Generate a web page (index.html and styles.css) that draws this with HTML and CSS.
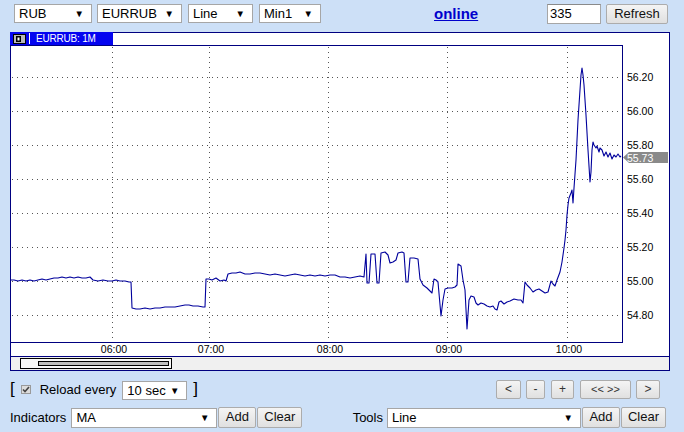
FILE: index.html
```html
<!DOCTYPE html>
<html>
<head>
<meta charset="utf-8">
<link rel="stylesheet" href="styles.css">
</head>
<body>
<div class="topbar">
  <div class="sel w-rub">RUB<span class="arr">▼</span></div>
  <div class="sel w-pair">EURRUB<span class="arr">▼</span></div>
  <div class="sel w-line">Line<span class="arr">▼</span></div>
  <div class="sel w-min">Min1<span class="arr">▼</span></div>
  <a class="online" href="#">online</a>
  <div class="inp">335</div>
  <div class="btn refresh">Refresh</div>
</div>

<div class="chart">
  <div class="titlebar">
    <div class="tab">
      <svg class="tabicon" width="13" height="10" viewBox="0 0 13 10">
        <rect x="0.5" y="0.5" width="12" height="9" fill="#b8b8b8" stroke="#000"/>
        <rect x="3" y="2" width="5" height="6" fill="#000"/>
        <rect x="4.5" y="3.5" width="2" height="3" fill="#fff"/>
      </svg>
      <span class="sep"></span>
      <span class="tabtext">EURRUB: 1M</span>
    </div>
  </div>
  <svg class="plot" width="658" height="311" viewBox="11 45 658 311">
    <g stroke="#555" stroke-width="1" stroke-dasharray="1 4" fill="none">
      <line x1="12" y1="77.5" x2="622" y2="77.5"/>
      <line x1="12" y1="111.5" x2="622" y2="111.5"/>
      <line x1="12" y1="145.5" x2="622" y2="145.5"/>
      <line x1="12" y1="179.5" x2="622" y2="179.5"/>
      <line x1="12" y1="213.5" x2="622" y2="213.5"/>
      <line x1="12" y1="247.5" x2="622" y2="247.5"/>
      <line x1="12" y1="281.5" x2="622" y2="281.5"/>
      <line x1="12" y1="315.5" x2="622" y2="315.5"/>
      <line x1="112.5" y1="47" x2="112.5" y2="342"/>
      <line x1="209.5" y1="47" x2="209.5" y2="342"/>
      <line x1="328.5" y1="47" x2="328.5" y2="342"/>
      <line x1="447.5" y1="47" x2="447.5" y2="342"/>
      <line x1="567.5" y1="47" x2="567.5" y2="342"/>
    </g>
    <g stroke="#000080" stroke-width="1" fill="none">
      <line x1="11" y1="45.5" x2="623" y2="45.5"/>
      <line x1="622.5" y1="45" x2="622.5" y2="343"/>
      <line x1="11" y1="342.5" x2="623" y2="342.5"/>
    </g>
    <polyline fill="none" stroke="#00009c" stroke-width="1.1" stroke-linejoin="round" points="11,280 14,280 18,281 22,280 26,281 30,280 34,281 38,280 42,279 46,280 50,279 54,278 58,278 62,277 66,278 70,277 74,278 78,277 82,278 86,278 90,277 93,280 98,281 103,280 108,281 112,281 116,280 120,281 125,281 129,282 131,282 132,308 136,309 140,309 145,308 150,309 155,308 160,308 165,307 170,307 175,307 180,306 185,305 189,305 193,306 198,306 203,307 205,307 206,279 209,279 212,280 216,278 220,281 224,280 226,281 228,274 232,273 236,273 240,272 245,274 250,274 255,273 260,273 265,274 270,275 275,274 280,275 285,276 290,275 295,274 300,275 305,276 310,275 315,276 320,275 325,276 330,275 335,275 340,277 345,277 350,278 355,277 360,276 364,277 366,254 367,283 369,283 371,254 375,254 377,283 379,283 381,253 385,252 388,255 390,263 393,262 396,260 398,253 402,252 404,253 406,282 408,282 410,258 414,258 418,259 420,279 423,285 427,288 430,291 432,293 434,279 436,280 438,282 441,316 443,300 445,289 448,288 452,288 455,287 457,285 458,264 461,266 463,280 465,290 467,329 469,300 471,296 474,297 476,303 478,305 481,303 484,304 487,306 490,307 493,306 495,309 497,310 499,302 501,301 504,304 507,302 510,301 514,299 518,300 521,300 523,303 525,282 527,285 530,288 533,292 536,290 539,289 542,291 545,293 548,292 551,281 553,284 555,286 557,280 560,272 562,262 564,248 565,240 566,230 567,215 568,205 569,198 571,193 572,190 573,203 574,188 576,160 578,120 580,90 581,75 582,68 583,75 584,85 586,115 588,150 590,182 591,172 592,150 593,142 594,145 596,148 597,146 599,152 600,148 602,150 604,156 606,152 608,157 610,153 612,159 614,155 616,157 618,154 620,157 621,156"/>
    <g class="ylab">
      <text x="627" y="81">56.20</text>
      <text x="627" y="115">56.00</text>
      <text x="627" y="149">55.80</text>
      <text x="627" y="183">55.60</text>
      <text x="627" y="217">55.40</text>
      <text x="627" y="251">55.20</text>
      <text x="627" y="285">55.00</text>
      <text x="627" y="319">54.80</text>
    </g>
    <polygon points="623,157.5 629,152 668,152 668,163 629,163" fill="#8a8a8a"/>
    <text class="tagtext" x="627" y="161.5">55.73</text>
    <g class="xlab">
      <text x="114" y="353">06:00</text>
      <text x="211" y="353">07:00</text>
      <text x="330" y="353">08:00</text>
      <text x="449" y="353">09:00</text>
      <text x="569" y="353">10:00</text>
    </g>
  </svg>
  <div class="scroll">
    <div class="thumb"><div class="thumbbar"></div></div>
  </div>
</div>

<div class="row1">
  <div class="group">
    <span class="brk">[</span>
    <span class="chk">
      <svg width="8" height="7" viewBox="0 0 8 7"><path d="M1 3.5 L3 5.5 L7 1" fill="none" stroke="#444" stroke-width="1.6"/></svg>
    </span>
    <span class="lbl reload">Reload every</span>
    <div class="sel w-sec">10 sec<span class="arr">▼</span></div>
    <span class="brk">]</span>
  </div>
  <div class="nav">
    <div class="btn nb w1">&lt;</div>
    <div class="btn nb w2">-</div>
    <div class="btn nb w3">+</div>
    <div class="btn nb w4">&lt;&lt; &gt;&gt;</div>
    <div class="btn nb w5">&gt;</div>
  </div>
</div>

<div class="row2">
  <div class="group">
    <span class="lbl">Indicators</span>
    <div class="sel w-ind">MA<span class="arr">▼</span></div>
    <div class="btn b-add">Add</div>
    <div class="btn b-clear">Clear</div>
  </div>
  <div class="group">
    <span class="lbl">Tools</span>
    <div class="sel w-tool">Line<span class="arr">▼</span></div>
    <div class="btn b-add">Add</div>
    <div class="btn b-clear">Clear</div>
  </div>
</div>
</body>
</html>
```

FILE: styles.css
```css
html, body {
  margin: 0;
  padding: 0;
}
body {
  width: 684px;
  height: 432px;
  overflow: hidden;
  background: #cde0f7;
  font-family: "Liberation Sans", Arial, sans-serif;
  font-size: 13px;
  color: #000;
}

.topbar {
  height: 32px;
  box-sizing: border-box;
  padding: 4px 0 0 14px;
  display: flex;
  align-items: flex-start;
}

.sel {
  position: relative;
  box-sizing: border-box;
  height: 19px;
  line-height: 17px;
  border: 1px solid #a6a6a6;
  background: #fff;
  padding-left: 4px;
  font-size: 13px;
}
.sel .arr {
  position: absolute;
  right: 7px;
  top: 0;
  font-size: 9.5px;
  line-height: 17px;
}
.w-rub { width: 78px; }
.w-pair { width: 85px; margin-left: 5px; }
.w-line { width: 65px; margin-left: 6px; }
.w-min { width: 62px; margin-left: 6px; }

.online {
  margin-left: 113px;
  width: 46px;
  font-weight: bold;
  font-size: 15px;
  line-height: 18px;
  color: #0000cc;
  text-decoration: underline;
  margin-top: 1px;
}

.inp {
  margin-left: 67px;
  box-sizing: border-box;
  width: 54px;
  height: 20px;
  line-height: 18px;
  border: 1px solid #a6a6a6;
  border-top-color: #8a8a8a;
  background: #fff;
  padding-left: 2px;
}

.btn {
  box-sizing: border-box;
  height: 20px;
  line-height: 18px;
  border: 1px solid #acacac;
  border-radius: 2px;
  background: linear-gradient(#f4f4f4, #e0e0e0);
  text-align: center;
  font-size: 13px;
  color: #111;
}
.refresh {
  width: 62px;
  margin-left: 5px;
}

.chart {
  margin-left: 10px;
  width: 660px;
  box-sizing: border-box;
  border: 1px solid #000080;
  background: #fff;
}
.titlebar {
  height: 12px;
  display: flex;
}
.tab {
  width: 103px;
  height: 13px;
  margin-top: -1px;
  margin-left: -1px;
  background: #0404f0;
  display: flex;
  align-items: center;
  color: #fff;
}
.tabicon {
  display: block;
  margin-left: 3px;
}
.sep {
  width: 1px;
  height: 11px;
  background: #fff;
  margin-left: 3px;
}
.tabtext {
  margin-left: 6px;
  font-size: 10px;
  line-height: 12px;
  letter-spacing: -0.2px;
}

.plot {
  display: block;
}
.ylab text, .xlab text, .tagtext {
  font-family: "Liberation Sans", Arial, sans-serif;
  font-size: 10.5px;
  fill: #000;
}
.xlab text {
  text-anchor: middle;
}
.tagtext {
  fill: #fff;
}

.scroll {
  height: 12px;
  border-top: 1px solid #000080;
  background: #f0f0f0;
  padding-top: 1px;
}
.thumb {
  margin-left: 9px;
  width: 152px;
  height: 11px;
  box-sizing: border-box;
  border: 1px solid #000;
  background: #f8f8f8;
  padding: 2px 0 0 17px;
}
.thumbbar {
  width: 131px;
  height: 5px;
  box-sizing: border-box;
  border: 1px solid #000;
  background: #c0c0c0;
}

.row1 {
  margin-top: 7px;
  height: 22px;
  display: flex;
  align-items: center;
  justify-content: space-between;
  padding: 0 24px 0 10px;
}
.group {
  display: flex;
  align-items: center;
}
.brk {
  font-size: 17px;
  line-height: 20px;
}
.chk {
  margin-left: 6px;
  width: 10px;
  height: 9px;
  box-sizing: border-box;
  border: 1px solid #9a9a9a;
  background: #dcdcdc;
  display: flex;
  align-items: center;
  justify-content: center;
}
.lbl {
  font-size: 13px;
}
.reload {
  margin-left: 9px;
}
.w-sec {
  width: 65px;
  height: 19px;
  margin: 2px 6px 0 6px;
}
.nav {
  display: flex;
  align-items: center;
}
.nb {
  height: 19px;
  line-height: 17px;
  font-size: 12px;
  color: #333;
}
.w1 { width: 25px; }
.w2 { width: 19px; margin-left: 5px; }
.w3 { width: 23px; margin-left: 6px; }
.w4 { width: 51px; margin-left: 6px; font-size: 11px; }
.w5 { width: 24px; margin-left: 5px; }

.row2 {
  margin-top: 7px;
  height: 21px;
  display: flex;
  align-items: center;
  justify-content: space-between;
  padding: 0 18px 0 10px;
}
.w-ind {
  width: 146px;
  height: 20px;
  line-height: 18px;
  margin-left: 5px;
}
.w-tool {
  width: 194px;
  height: 20px;
  line-height: 18px;
  margin-left: 4px;
}
.sel.w-ind .arr, .sel.w-tool .arr {
  line-height: 18px;
}
.b-add {
  width: 38px;
  height: 21px;
  margin-left: 1px;
}
.b-clear {
  width: 45px;
  height: 21px;
  margin-left: 1px;
}
```
